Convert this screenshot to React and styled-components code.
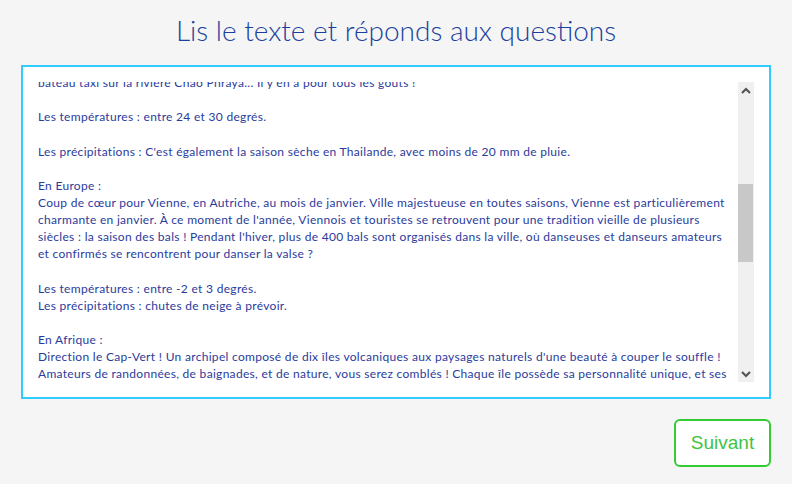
import React, { useLayoutEffect, useRef } from "react";
import styled, { createGlobalStyle } from "styled-components";

const GlobalStyle = createGlobalStyle`
  html, body { margin: 0; padding: 0; background: #f5f5f5; }
  body { font-family: Lato, "Noto Sans", sans-serif; }
`;

const Page = styled.div`
  padding: 0 21px;
  display: flex;
  flex-direction: column;
`;

const Title = styled.h1`
  margin: 13px 0 18px;
  text-align: center;
  font-family: Lato, "Noto Sans", sans-serif;
  font-weight: 300;
  font-size: 28px;
  line-height: 34px;
  color: #1b3f9e;
`;

const Panel = styled.section`
  border: 2px solid #33ccff;
  background: #ffffff;
  padding: 15px;
  display: flex;
`;

const Viewport = styled.div`
  position: relative;
  flex: 1;
  height: 300px;
  overflow: hidden;
  font-family: Lato, "Noto Sans", sans-serif;
  font-size: 12px;
  letter-spacing: 0.3px;
  line-height: 17.14px;
  color: #2a3b9c;
  white-space: nowrap;
`;

const Paragraph = styled.p`
  margin: 0 0 17.14px;
`;

const Line = styled.span`
  display: block;
`;

const ScrollBar = styled.div`
  width: 16px;
  height: 300px;
  background: #f0f0f0;
  display: flex;
  flex-direction: column;
  flex-shrink: 0;
`;

const ArrowButton = styled.div`
  height: 16px;
  display: flex;
  align-items: center;
  justify-content: center;
  flex-shrink: 0;
`;

const Track = styled.div`
  flex: 1;
`;

const Thumb = styled.div`
  margin: ${(p) => p.$top}px 1px 0 0;
  height: ${(p) => p.$height}px;
  background: #c8c8c8;
`;

const Footer = styled.div`
  display: flex;
  justify-content: flex-end;
  padding-top: 20px;
`;

const NextButton = styled.button`
  width: 97px;
  height: 48px;
  border: 2px solid #33cc33;
  border-radius: 6px;
  background: #ffffff;
  color: #40c440;
  font-family: "Liberation Sans", Arial, sans-serif;
  font-size: 19px;
  cursor: pointer;
  padding: 0;
`;

const Chevron = ({ up }) => (
  <svg width="10" height="7" viewBox="0 0 10 7">
    <polyline
      points={up ? "1,6 5,2 9,6" : "1,1 5,5 9,1"}
      fill="none"
      stroke="#555555"
      strokeWidth="2.2"
    />
  </svg>
);

export default function App() {
  const viewRef = useRef(null);
  const markRef = useRef(null);

  useLayoutEffect(() => {
    if (viewRef.current && markRef.current) {
      viewRef.current.scrollTop = markRef.current.offsetTop + 8;
    }
  }, []);

  return (
    <>
      <GlobalStyle />
      <Page>
        <Title>Lis le texte et réponds aux questions</Title>
        <Panel>
          <Viewport ref={viewRef}>
            <Paragraph>
              <Line>Où partir en vacances cet hiver ?</Line>
            </Paragraph>
            <Paragraph>
              <Line>Quand l'hiver arrive, certains rêvent de soleil et de plages, d'autres préfèrent la neige et les traditions. Voici trois destinations</Line>
              <Line>idéales pour des vacances inoubliables, sur trois continents différents.</Line>
            </Paragraph>
            <Paragraph>
              <Line>En Asie :</Line>
              <Line>Direction la Thaïlande et sa capitale, Bangkok ! En hiver, c'est la meilleure saison pour découvrir cette ville pleine de vie. Les</Line>
              <Line>temples bouddhistes, les palais dorés, les marchés flottants, la cuisine de rue, les massages traditionnels ou encore une balade en</Line>
              <Line ref={markRef}>bateau taxi sur la rivière Chao Phraya... Il y en a pour tous les goûts !</Line>
            </Paragraph>
            <Paragraph>
              <Line>Les températures : entre 24 et 30 degrés.</Line>
            </Paragraph>
            <Paragraph>
              <Line>Les précipitations : C'est également la saison sèche en Thailande, avec moins de 20 mm de pluie.</Line>
            </Paragraph>
            <Paragraph>
              <Line>En Europe :</Line>
              <Line>Coup de cœur pour Vienne, en Autriche, au mois de janvier. Ville majestueuse en toutes saisons, Vienne est particulièrement</Line>
              <Line>charmante en janvier. À ce moment de l'année, Viennois et touristes se retrouvent pour une tradition vieille de plusieurs</Line>
              <Line>siècles : la saison des bals ! Pendant l'hiver, plus de 400 bals sont organisés dans la ville, où danseuses et danseurs amateurs</Line>
              <Line>et confirmés se rencontrent pour danser la valse ?</Line>
            </Paragraph>
            <Paragraph>
              <Line>Les températures : entre -2 et 3 degrés.</Line>
              <Line>Les précipitations : chutes de neige à prévoir.</Line>
            </Paragraph>
            <Paragraph>
              <Line>En Afrique :</Line>
              <Line>Direction le Cap-Vert ! Un archipel composé de dix îles volcaniques aux paysages naturels d'une beauté à couper le souffle !</Line>
              <Line>Amateurs de randonnées, de baignades, et de nature, vous serez comblés ! Chaque île possède sa personnalité unique, et ses</Line>
              <Line>habitants vous accueilleront avec le sourire au son de la morna, la musique traditionnelle du pays.</Line>
            </Paragraph>
            <Paragraph>
              <Line>Les températures : entre 22 et 27 degrés.</Line>
              <Line>Les précipitations : quasiment aucune, c'est la saison sèche.</Line>
            </Paragraph>
            <Paragraph>
              <Line>En Amérique :</Line>
              <Line>Envie de grands espaces ? Le Québec, au Canada, vous attend avec ses forêts enneigées, ses lacs gelés et ses chiens de</Line>
              <Line>traîneau. Au programme : patin à glace, raquettes, motoneige et, bien sûr, une bonne dégustation de sirop d'érable !</Line>
            </Paragraph>
            <Paragraph>
              <Line>Les températures : entre -15 et -5 degrés.</Line>
              <Line>Les précipitations : beaucoup de neige, prévoyez des vêtements chauds.</Line>
            </Paragraph>
            <Paragraph>
              <Line>Et toi, quelle destination choisirais-tu pour tes vacances d'hiver ?</Line>
            </Paragraph>
          </Viewport>
          <ScrollBar>
            <ArrowButton>
              <Chevron up />
            </ArrowButton>
            <Track>
              <Thumb $top={86} $height={78} />
            </Track>
            <ArrowButton>
              <Chevron />
            </ArrowButton>
          </ScrollBar>
        </Panel>
        <Footer>
          <NextButton>Suivant</NextButton>
        </Footer>
      </Page>
    </>
  );
}
